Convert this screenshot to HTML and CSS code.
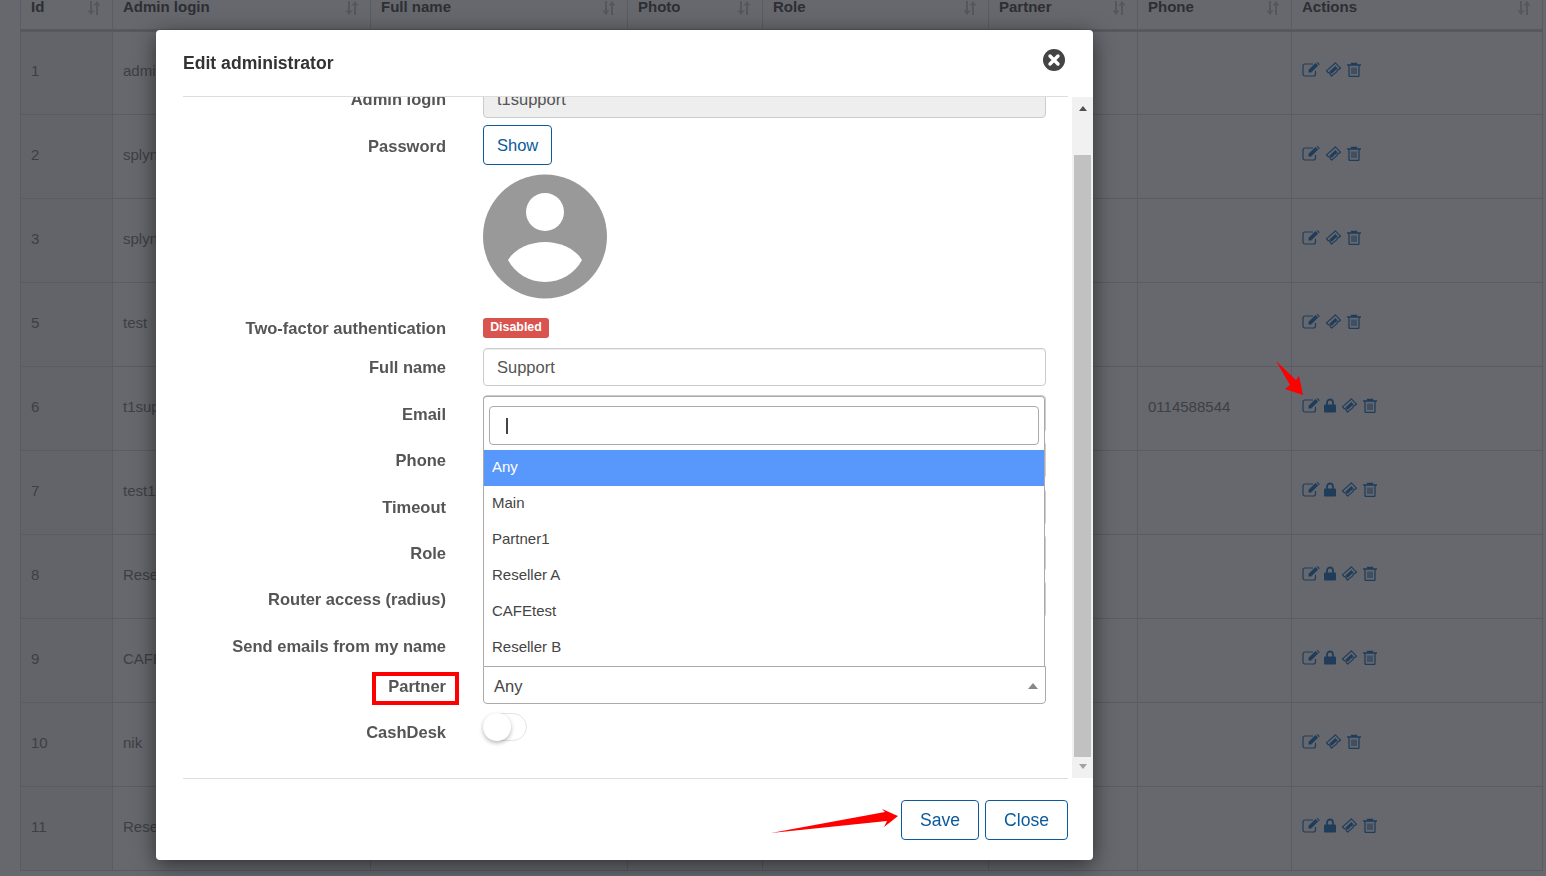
FILE: index.html
```html
<!DOCTYPE html>
<html lang="en">
<head>
    <meta charset="UTF-8">
    <title>Administrators</title>
    <link rel="stylesheet" href="styles.css">
</head>
<body>
<svg class="defs" width="0" height="0">
    <symbol id="i-edit" viewBox="0 0 18 15">
        <path d="M13.5 9v3a2 2 0 0 1-2 2H3a2 2 0 0 1-2-2V4a2 2 0 0 1 2-2h8" fill="none" stroke="currentColor" stroke-width="1.2"/>
        <path d="M6.5 7.8 13.6 .9l2.6 2.6-7 7H6.5zM14.5 0l.9-.2 2.4 2.4-.9 1.1z" fill="currentColor"/>
    </symbol>
    <symbol id="i-lock" viewBox="0 0 12 14">
        <path d="M3 6.5V4a3 3 0 0 1 6 0v2.500" fill="none" stroke="currentColor" stroke-width="1.800"/>
        <rect x="0" y="6" width="12" height="8" rx="1" fill="currentColor"/>
    </symbol>
    <symbol id="i-ticket" viewBox="0 0 17 16">
        <path d="M10.500 1 16 6.500l-1.500 1.500a1.500 1.500 0 0 0-2 2L6.500 15 5 13.500a1.500 1.500 0 0 0-2-2L1 9.500z" fill="none" stroke="currentColor" stroke-width="1.300" stroke-linejoin="round"/>
        <path d="M10.500 4.200 12.900 6.600 6.600 12.600 4.200 10.200z" fill="currentColor"/>
    </symbol>
    <symbol id="i-trash" viewBox="0 0 14 15">
        <path d="M0 3h14M4.500 3V1.500h5V3M2 3v10.500a1 1 0 0 0 1 1h8a1 1 0 0 0 1-1V3" fill="none" stroke="currentColor" stroke-width="1.300"/>
        <path d="M5 5.500v6.500M7 5.500v6.500M9 5.500v6.500" fill="none" stroke="currentColor" stroke-width="1.100"/>
    </symbol>
    <symbol id="i-sort" viewBox="0 0 14 14">
        <path d="M3 0h2v9.500h2.500L4 14 .5 9.500H3zM9 14h2V4.500h2.500L10 0 6.500 4.500H9z" fill="currentColor"/>
    </symbol>
</svg>

<table class="list">
    <thead>
    <tr>
        <th class="c-id">Id<svg class="sort"><use href="#i-sort"/></svg></th>
        <th class="c-login">Admin login<svg class="sort"><use href="#i-sort"/></svg></th>
        <th class="c-name">Full name<svg class="sort"><use href="#i-sort"/></svg></th>
        <th class="c-photo">Photo<svg class="sort"><use href="#i-sort"/></svg></th>
        <th class="c-role">Role<svg class="sort"><use href="#i-sort"/></svg></th>
        <th class="c-partner">Partner<svg class="sort"><use href="#i-sort"/></svg></th>
        <th class="c-phone">Phone<svg class="sort"><use href="#i-sort"/></svg></th>
        <th class="c-actions">Actions<svg class="sort"><use href="#i-sort"/></svg></th>
    </tr>
    </thead>
    <tbody>
    <tr><td class="c-id">1</td><td>admin</td><td></td><td></td><td></td><td></td><td></td>
        <td><div class="acts"><svg class="i-e"><use href="#i-edit"/></svg><svg class="i-t"><use href="#i-ticket"/></svg><svg class="i-d"><use href="#i-trash"/></svg></div></td></tr>
    <tr><td class="c-id">2</td><td>splynx</td><td></td><td></td><td></td><td></td><td></td>
        <td><div class="acts"><svg class="i-e"><use href="#i-edit"/></svg><svg class="i-t"><use href="#i-ticket"/></svg><svg class="i-d"><use href="#i-trash"/></svg></div></td></tr>
    <tr><td class="c-id">3</td><td>splynx</td><td></td><td></td><td></td><td></td><td></td>
        <td><div class="acts"><svg class="i-e"><use href="#i-edit"/></svg><svg class="i-t"><use href="#i-ticket"/></svg><svg class="i-d"><use href="#i-trash"/></svg></div></td></tr>
    <tr><td class="c-id">5</td><td>test</td><td></td><td></td><td></td><td></td><td></td>
        <td><div class="acts"><svg class="i-e"><use href="#i-edit"/></svg><svg class="i-t"><use href="#i-ticket"/></svg><svg class="i-d"><use href="#i-trash"/></svg></div></td></tr>
    <tr><td class="c-id">6</td><td>t1support</td><td></td><td></td><td></td><td></td><td>0114588544</td>
        <td><div class="acts"><svg class="i-e"><use href="#i-edit"/></svg><svg class="i-l"><use href="#i-lock"/></svg><svg class="i-t"><use href="#i-ticket"/></svg><svg class="i-d"><use href="#i-trash"/></svg></div></td></tr>
    <tr><td class="c-id">7</td><td>test1</td><td></td><td></td><td></td><td></td><td></td>
        <td><div class="acts"><svg class="i-e"><use href="#i-edit"/></svg><svg class="i-l"><use href="#i-lock"/></svg><svg class="i-t"><use href="#i-ticket"/></svg><svg class="i-d"><use href="#i-trash"/></svg></div></td></tr>
    <tr><td class="c-id">8</td><td>Reseller A</td><td></td><td></td><td></td><td></td><td></td>
        <td><div class="acts"><svg class="i-e"><use href="#i-edit"/></svg><svg class="i-l"><use href="#i-lock"/></svg><svg class="i-t"><use href="#i-ticket"/></svg><svg class="i-d"><use href="#i-trash"/></svg></div></td></tr>
    <tr><td class="c-id">9</td><td>CAFEtest</td><td></td><td></td><td></td><td></td><td></td>
        <td><div class="acts"><svg class="i-e"><use href="#i-edit"/></svg><svg class="i-l"><use href="#i-lock"/></svg><svg class="i-t"><use href="#i-ticket"/></svg><svg class="i-d"><use href="#i-trash"/></svg></div></td></tr>
    <tr><td class="c-id">10</td><td>nik</td><td></td><td></td><td></td><td></td><td></td>
        <td><div class="acts"><svg class="i-e"><use href="#i-edit"/></svg><svg class="i-t"><use href="#i-ticket"/></svg><svg class="i-d"><use href="#i-trash"/></svg></div></td></tr>
    <tr><td class="c-id">11</td><td>Reseller B</td><td></td><td></td><td></td><td></td><td></td>
        <td><div class="acts"><svg class="i-e"><use href="#i-edit"/></svg><svg class="i-l"><use href="#i-lock"/></svg><svg class="i-t"><use href="#i-ticket"/></svg><svg class="i-d"><use href="#i-trash"/></svg></div></td></tr>
    </tbody>
</table>

<div class="backdrop"></div>

<div class="modal">
    <div class="modal-head">
        <h4>Edit administrator</h4>
        <svg class="x-btn" viewBox="0 0 22 22">
            <circle cx="11" cy="11" r="11" fill="#444"/>
            <path d="M7 7l8 8M15 7l-8 8" stroke="#fff" stroke-width="3.400" stroke-linecap="round"/>
        </svg>
    </div>
    <div class="modal-body">
        <div class="scroller">
            <div class="form">
                <div class="row row-login"><label>Admin login</label><div class="field"><div class="input off">t1support</div></div></div>
                <div class="row row-pass"><label>Password</label><div class="field"><a class="btn" href="#">Show</a></div></div>
                <div class="row row-photo"><label></label><div class="field">
                    <svg class="avatar" viewBox="0 0 125 125">
                        <circle cx="62" cy="62.500" r="62" fill="#999"/>
                        <circle cx="62" cy="38" r="19" fill="#fff"/>
                        <path d="M25 86C32 74 48 68 62 68S92 74 99 86C92 99 78 108 62 108S32 99 25 86Z" fill="#fff"/>
                    </svg>
                </div></div>
                <div class="row row-tfa"><label>Two-factor authentication</label><div class="field"><span class="badge">Disabled</span></div></div>
                <div class="row row-name"><label>Full name</label><div class="field"><div class="input">Support</div></div></div>
                <div class="row"><label>Email</label><div class="field"><div class="input"></div></div></div>
                <div class="row"><label>Phone</label><div class="field"><div class="input"></div></div></div>
                <div class="row"><label>Timeout</label><div class="field"><div class="input"></div></div></div>
                <div class="row"><label>Role</label><div class="field"><div class="input"></div></div></div>
                <div class="row"><label>Router access (radius)</label><div class="field"><div class="input"></div></div></div>
                <div class="row row-send"><label>Send emails from my name</label><div class="field"></div></div>
                <div class="row row-partner">
                    <label><span class="marked">Partner</span></label>
                    <div class="field">
                        <div class="drop">
                            <div class="drop-search"><div class="search-box"><i class="caret"></i></div></div>
                            <ul>
                                <li class="on">Any</li>
                                <li>Main</li>
                                <li>Partner1</li>
                                <li>Reseller A</li>
                                <li>CAFEtest</li>
                                <li>Reseller B</li>
                            </ul>
                        </div>
                        <div class="select">Any<b></b></div>
                    </div>
                </div>
                <div class="row"><label>CashDesk</label><div class="field"><div class="toggle"><i></i></div></div></div>
            </div>
        </div>
        <div class="sbar">
            <b class="up"></b>
            <div class="thumb"></div>
            <b class="down"></b>
        </div>
    </div>
    <div class="modal-foot">
        <a class="btn" href="#">Save</a>
        <a class="btn" href="#">Close</a>
    </div>
</div>

<svg class="marks" width="1546" height="876" viewBox="0 0 1546 876">
    <path d="M1276 361 1296 380 1299 376 1303 395 1285 389 1290 385Z" fill="#f00"/>
    <path d="M771 833 885 812 882 809 898 816 884 827 887 821Z" fill="#f00"/>
</svg>
</body>
</html>
```

FILE: styles.css
```css
*{box-sizing:border-box;}
html,body{height:100%;}
body{margin:0;overflow:hidden;background:#fff;font-family:"Liberation Sans",Arial,sans-serif;font-size:15px;color:#555;}
.defs{display:block;height:0;}
a{text-decoration:none;}

/* table behind the dialog */
.list{border-collapse:collapse;table-layout:fixed;width:1522px;margin:-20px 0 0 20px;}
.list th,.list td{border:1px solid #e0e0e2;padding:0 10px;text-align:left;}
.list th{height:50px;border-bottom:3px solid #d8d8da;color:#707070;font-size:15px;font-weight:bold;position:relative;padding-top:3px;vertical-align:middle;}
.list td{height:84px;color:#999;padding-bottom:5px;}
.list td.c-id{background:#f5f5f6;}
.c-id{width:92px;}
.c-login{width:258px;}
.c-name{width:257px;}
.c-photo{width:135px;}
.c-role{width:226px;}
.c-partner{width:149px;}
.c-phone{width:154px;}
.c-actions{width:251px;}
.sort{position:absolute;right:11px;top:20px;width:14px;height:14px;color:#d4d4d4;}
.acts{display:flex;align-items:center;color:#4f93cf;margin-top:-2px;}
.acts svg{display:block;height:15px;}
.i-e{width:18px;margin-right:5px;}
.i-l{width:12px;margin:0 5px 0 -1px;}
.i-t{width:17px;margin-right:5px;}
.i-d{width:14px;}

.backdrop{position:fixed;top:0;left:0;right:0;bottom:0;background:rgba(0,4,12,.6);}

/* dialog */
.modal{position:fixed;left:156px;top:30px;width:937px;height:830px;background:#fff;border-radius:4px;box-shadow:0 5px 22px rgba(0,0,0,.55);display:flex;flex-direction:column;overflow:hidden;}
.modal-head{height:67px;flex:none;margin:0 25px 0 27px;border-bottom:1px solid #ddd;display:flex;justify-content:space-between;align-items:flex-start;}
.modal-head h4{margin:23px 0 0;font-size:17.600px;line-height:20px;font-weight:bold;color:#333;}
.x-btn{width:22px;height:22px;margin:19px 3px 0 0;}
.modal-body{flex:1;display:flex;min-height:0;}
.scroller{flex:1;overflow:hidden;min-width:0;}
.form{margin:-17px 0 0 27px;font-size:16.5px;}
.row{display:flex;gap:37px;margin-bottom:8.25px;}
.row label{width:263px;flex:none;text-align:right;font-weight:bold;line-height:38px;color:#555;white-space:nowrap;}
.field{width:563px;flex:none;position:relative;}
.input{height:38px;border:1px solid #ccc;border-radius:4px;padding:0 13px;line-height:36px;color:#555;box-shadow:inset 0 1px 1px rgba(0,0,0,.075);background:#fff;}
.input.off{background:#eee;}
.btn{display:inline-block;height:40px;line-height:38px;padding:0 13px;border:1px solid #0a5a9c;border-radius:4px;color:#0a5a9c;font-size:16.5px;background:#fff;}
.row-login{margin-bottom:7px;}
.row-pass{height:40px;margin-bottom:9px;}
.row-pass label{line-height:42px;}
.row-photo{margin-bottom:19px;}
.row-name{margin-bottom:9px;}
.avatar{display:block;width:125px;height:125px;}
.row-tfa{height:20px;margin-bottom:10px;}
.row-tfa label{line-height:20px;}
.badge{display:block;width:66px;height:20px;background:#d9534f;color:#fff;border-radius:3px;font-size:12.400px;font-weight:bold;line-height:18px;text-align:center;}
.row-send{height:31.750px;margin-bottom:8px;}
.row-send label{line-height:40px;}
.row-partner{height:38px;margin-bottom:9px;}
.marked{display:inline-block;height:33px;line-height:20px;border:4px solid #f00;padding:0 9px 0 12px;margin:6px -13px 0 0;vertical-align:top;}

/* partner select, open upwards */
.select{height:38px;border:1px solid #aaa;border-radius:0 0 4px 4px;padding-left:10px;line-height:38px;color:#444;background:#fff;position:relative;}
.select b{position:absolute;right:7px;top:16px;border:5px solid transparent;border-top:0;border-bottom:6px solid #888;}
.drop{position:absolute;left:0;bottom:100%;width:562px;height:270px;border:1px solid #aaa;border-bottom:0;border-radius:4px 4px 0 0;background:#fff;font-size:15px;z-index:2;}
.drop-search{padding:9px 5px 5px;}
.search-box{height:39px;border:1px solid #aaa;border-radius:4px;padding:11px 16px;}
.caret{display:block;width:2px;height:16px;background:#444;}
.drop ul{list-style:none;margin:0;padding:0;}
.drop li{height:36px;line-height:34px;padding-left:8px;color:#444;}
.drop li.on{background:#5897fb;color:#fff;}

.toggle{width:44px;height:28px;border:1px solid #e3e3e3;border-radius:14px;position:relative;background:#fff;}
.toggle i{position:absolute;left:-1px;top:-1px;width:28px;height:28px;border-radius:50%;background:#fff;box-shadow:0 2px 4px rgba(0,0,0,.28);}

/* scrollbar */
.sbar{width:21px;flex:none;background:#f1f1f1;padding:0 2px;display:flex;flex-direction:column;align-items:stretch;}
.sbar b{display:block;width:0;align-self:center;border:4.500px solid transparent;}
.sbar .up{border-top:0;border-bottom:5px solid #505050;margin-top:9px;margin-bottom:44px;}
.sbar .down{border-bottom:0;border-top:5px solid #a3a3a3;margin-top:7px;}
.thumb{height:602px;background:#c1c1c1;}

.modal-foot{height:82px;flex:none;margin:0 25px 0 27px;border-top:1px solid #ddd;display:flex;justify-content:flex-end;gap:6px;padding-top:21px;}
.modal-foot .btn{padding:0 18px;text-align:center;font-size:17.600px;}

.marks{position:fixed;left:0;top:0;}
```
